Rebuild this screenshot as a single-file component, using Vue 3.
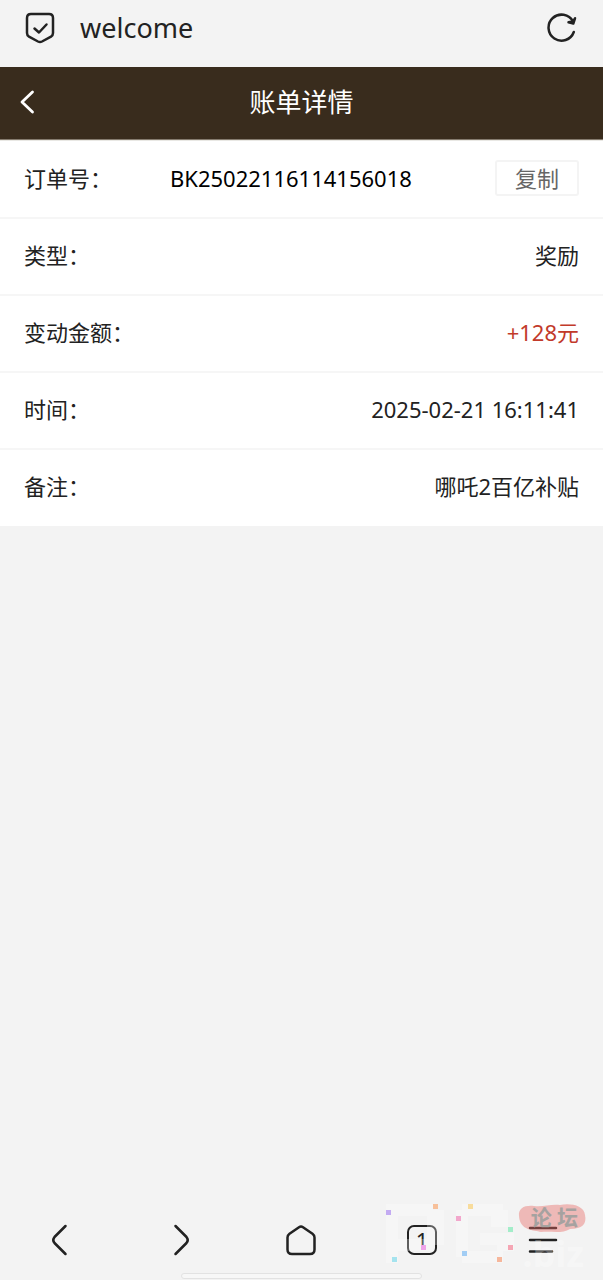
<script setup>
const rows = [
  { label: '类型：', value: '奖励' },
  { label: '变动金额：', value: '+128元', accent: true },
  { label: '时间：', value: '2025-02-21 16:11:41' },
  { label: '备注：', value: '哪吒2百亿补贴' },
]
const orderNo = 'BK25022116114156018'
const copy = () => navigator.clipboard?.writeText(orderNo)

const specks = [
  [0, 6, '#c3abf2'], [47, 0, '#f7c09a'], [70, 12, '#f2a7cc'], [82, 0, '#f8dc9c'],
  [122, 23, '#a3edc9'], [35, 41, '#efa3e8'], [6, 53, '#a5e3ee'], [76, 47, '#a2cdf4'],
  [122, 41, '#f5a6b4'], [111, 53, '#f6b79c'],
]
</script>

<template>
  <div class="screen">
    <header class="browser-bar">
      <svg class="shield" viewBox="0 0 32 34" aria-hidden="true">
        <path d="M7 3H25Q29 3 29 7V22Q29 24.500 27 25.700L18 30.500Q16 31.500 14 30.500L5 25.700Q3 24.500 3 22V7Q3 3 7 3Z" />
        <path d="M10.500 17.500L15 21.500L22.500 13.500" />
      </svg>
      <span class="site">welcome</span>
      <button class="plain reload" type="button" aria-label="刷新">
        <svg viewBox="0 0 32 32" aria-hidden="true">
          <path d="M26.800 20A13 13 0 1 1 26 9.500" />
          <path class="head" d="M21.500 10.300L26.300 11.500L28 6.300L26 9.500Z" />
        </svg>
      </button>
    </header>

    <div class="title-bar">
      <button class="plain back" type="button" aria-label="返回">
        <svg viewBox="0 0 16 26" aria-hidden="true"><path d="M12.500 3L2 13L12.500 23" /></svg>
      </button>
      <h1>账单详情</h1>
    </div>

    <main>
      <dl>
        <div class="row">
          <dt class="order-label">订单号：</dt>
          <dd class="order">{{ orderNo }}</dd>
          <dd><button class="copy" type="button" @click="copy">复制</button></dd>
        </div>
        <div v-for="row in rows" :key="row.label" class="row">
          <dt>{{ row.label }}</dt>
          <dd :class="{ accent: row.accent }">{{ row.value }}</dd>
        </div>
      </dl>
    </main>

    <nav class="tabs">
      <button class="plain" type="button" aria-label="后退">
        <svg viewBox="0 0 32 32"><path d="M21.500 2L10.500 13Q8 16 10.500 19L21.500 30" /></svg>
      </button>
      <button class="plain" type="button" aria-label="前进">
        <svg viewBox="0 0 32 32"><path d="M10.500 2L21.500 13Q24 16 21.500 19L10.500 30" /></svg>
      </button>
      <button class="plain" type="button" aria-label="主页">
        <svg viewBox="0 0 32 32"><path d="M14 3.200Q16 1.800 18 3.200L27.500 9.700Q29.500 11.200 29.500 13.500V25.500Q29.500 30 25 30H7Q2.500 30 2.500 25.500V13.500Q2.500 11.200 4.500 9.700Z" /></svg>
      </button>
      <button class="plain" type="button" aria-label="标签页">
        <span class="count">1</span>
      </button>
      <button class="plain" type="button" aria-label="菜单">
        <svg viewBox="0 0 32 32"><path d="M3 4H29M3 16H29M3 27.500H25" /></svg>
      </button>
    </nav>
    <div class="handle"></div>

    <div class="watermark" aria-hidden="true">
      <svg viewBox="0 0 200 60">
        <path class="ghost" d="M0 0H47V6H58V41H47V47H12V59H0ZM12 12V35H41V12ZM76 0H117V6H122V23H105V12H82V47H111V41H94V29H128V47H117V59H76V53H70V6H76Z" fill-rule="evenodd" />
        <rect v-for="([x, y, c], i) in specks" :key="i" :x="x" :y="y" width="5" height="5" :fill="c" />
        <path class="blob" d="M133 12C132 4 139 1 148 2C158 3 164 0 174 1C184-1 198 1 199 11C201 20 196 25 184 25C176 30 166 27 155 28C148 26 134 27 133 12Z" />
      </svg>
      <span class="forum">论 坛</span>
      <span class="domain">.biz</span>
    </div>
  </div>
</template>

<style>
body {
  margin: 0;
  background: #f3f3f3;
}
</style>

<style scoped>
.screen {
  position: relative;
  display: flex;
  flex-direction: column;
  min-height: 100vh;
  background: #f3f3f3;
  color: #222;
  font-family: "Noto Sans", "Noto Sans CJK SC", sans-serif;
  font-size: 22px;
  line-height: 32px;
}
.plain {
  display: flex;
  align-items: center;
  justify-content: center;
  padding: 0;
  border: 0;
  background: none;
  color: inherit;
  font: inherit;
}
svg {
  display: block;
  fill: none;
  stroke: currentColor;
  stroke-width: 2.5;
  stroke-linecap: round;
  stroke-linejoin: round;
}
.browser-bar {
  display: flex;
  align-items: center;
  box-sizing: border-box;
  height: 67px;
  padding: 0 24px 12px;
}
.shield {
  width: 32px;
  height: 34px;
}
.site {
  flex: 1;
  margin-left: 24px;
  font-size: 27px;
}
.reload svg {
  width: 32px;
  height: 32px;
}
.reload .head {
  fill: currentColor;
}
.title-bar {
  display: grid;
  grid-template-columns: 1fr auto 1fr;
  align-items: center;
  box-sizing: border-box;
  height: 73px;
  padding: 0 20px 3px;
  border-bottom: 1px solid #857b6e;
  background: #392c1d;
  color: #fff;
}
.back {
  justify-self: start;
}
.back svg {
  width: 16px;
  height: 26px;
  stroke-width: 2.8;
}
h1 {
  margin: 0;
  font-size: 26px;
  font-weight: 400;
}
main {
  flex: 1;
}
dl {
  margin: 0;
  padding-top: 1px;
  border-top: 1px solid #e9e8e4;
  background: #fff;
}
.row {
  display: flex;
  align-items: center;
  justify-content: space-between;
  box-sizing: border-box;
  min-height: 77px;
  padding: 0 24px 4px;
  border-bottom: 2px solid #f6f6f6;
}
.row:last-child {
  min-height: 76px;
  border-bottom: 0;
}
dd {
  margin: 0;
}
.order-label {
  width: 146px;
}
.order {
  flex: 1;
  color: #000;
}
.accent {
  color: #c23a2a;
}
.copy {
  display: block;
  padding: 0 18px;
  border: 2px solid #f4f4f4;
  border-radius: 3px;
  background: #fff;
  color: #666;
  font: inherit;
}
.tabs {
  display: grid;
  grid-template-columns: repeat(5, 1fr);
  height: 66px;
}
.tabs svg {
  width: 32px;
  height: 32px;
}
.count {
  box-sizing: border-box;
  width: 30px;
  height: 30px;
  border: 2px solid #222;
  border-radius: 7px;
  font-size: 22px;
  line-height: 26px;
}
.handle {
  box-sizing: border-box;
  width: 40%;
  height: 6px;
  margin: 0 auto 1px;
  border: 1px solid #e2e2e2;
  border-radius: 3px;
  background: #f7f7f7;
}
.watermark {
  position: absolute;
  right: 17px;
  bottom: 16px;
  width: 200px;
  height: 60px;
  pointer-events: none;
}
.watermark svg {
  stroke: none;
  overflow: visible;
}
.ghost {
  fill: #fff;
  fill-opacity: 0.28;
}
.blob {
  fill: #e66a64;
  fill-opacity: 0.42;
}
.forum,
.domain {
  position: absolute;
}
.forum {
  right: 8px;
  top: 0;
  color: #a6a2a0;
  font-family: "Liberation Serif", "Noto Sans CJK SC", serif;
  font-size: 21px;
  font-weight: 700;
  line-height: 28px;
}
.domain {
  right: 2px;
  bottom: -6px;
  color: rgb(255 255 255 / 0.3);
  font-size: 36px;
  font-weight: 700;
}
</style>
